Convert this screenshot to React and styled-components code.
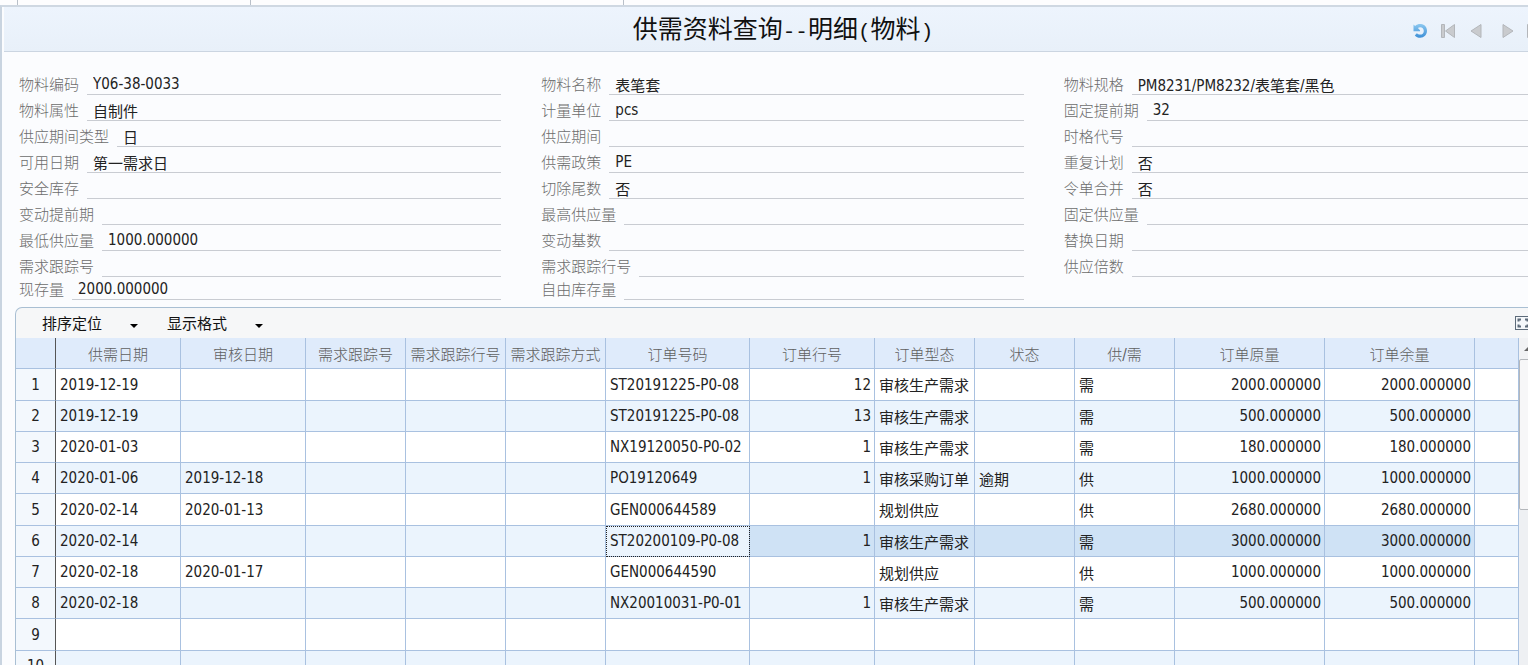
import React from 'react';
import styled, { createGlobalStyle, css } from 'styled-components';

const GlobalStyle = createGlobalStyle`
  * {
    box-sizing: border-box;
  }
  body {
    margin: 0;
    background: #fbfcfe;
    color: #222;
    font-family: "DejaVu Sans Condensed", "Noto Sans CJK SC", sans-serif;
    font-size: 15px;
  }
  button, input {
    font: inherit;
    color: inherit;
  }
`;

const Page = styled.div`
  height: 100vh;
  overflow: hidden;
  display: flex;
  flex-direction: column;
`;

const TabStrip = styled.div`
  display: flex;
  flex: none;
  height: 5px;
  background: #fdfdfe;
`;

const TabEdge = styled.div`
  width: ${(p) => p.$width}px;
  border-right: 1px solid #b9c0c9;
`;

// the form is wider than the window, its right edge is cut off
const Sheet = styled.main`
  flex: 1;
  min-height: 0;
  width: calc(100% + 34px);
  display: flex;
  flex-direction: column;
  border-top: 2px solid #cfd8e2;
  border-left: 2px solid #c9d4e0;
`;

const Header = styled.header`
  flex: none;
  display: grid;
  grid-template-columns: 1fr auto 1fr;
  align-items: center;
  height: 45px;
  margin-left: 2px;
  padding: 0 12px;
  background: linear-gradient(#edf4fd, #e8f0f9);
  border-bottom: 1px solid #cbd5e1;
`;

const Title = styled.h1`
  grid-column: 2;
  margin: 0;
  padding-top: 2px;
  font-size: 25px;
  line-height: 42px;
  font-weight: 400;
  color: #111;
`;

const Half = styled.span`
  font-family: "Liberation Mono", monospace;
  font-size: 21px;
`;

const Nav = styled.nav`
  display: flex;
  justify-content: flex-end;
`;

const NavButton = styled.button`
  display: flex;
  align-items: center;
  justify-content: center;
  width: 28px;
  height: 28px;
  margin-left: ${(p) => (p.$apart ? 4 : 0)}px;
  padding: 0;
  border: none;
  background: none;
  cursor: pointer;
`;

const Form = styled.form`
  flex: none;
  display: grid;
  grid-template-columns: repeat(3, 1fr);
  gap: 40px;
  padding: 17px 16px 0 17px;
`;

const FormColumn = styled.div`
  display: grid;
  grid-template-rows: repeat(8, 26px) 23px;
`;

const Field = styled.div`
  display: flex;
  align-items: flex-end;
  gap: 8px;
`;

const Label = styled.label`
  flex: none;
  line-height: 20px;
  font-weight: 300;
  color: #6c6c6c;
`;

const Value = styled.input`
  flex: 1;
  min-width: 0;
  height: 21px;
  padding: 0 6px;
  border: none;
  border-bottom: 1px solid #c9ccd2;
  border-radius: 0;
  background: none;
  outline: none;
`;

const Panel = styled.section`
  flex: 1;
  min-height: 0;
  overflow: hidden;
  margin: 7px 16px 0 13px;
  border: 1px solid #a9bfd3;
  border-bottom: none;
  border-radius: 7px 7px 0 0;
  background: #f6f7f8;
`;

const Toolbar = styled.div`
  display: flex;
  align-items: center;
  justify-content: space-between;
  height: 30px;
  padding: 0 14px 0 26px;
`;

const Menus = styled.div`
  display: flex;
  gap: 29px;
`;

const MenuButton = styled.button`
  display: flex;
  align-items: center;
  gap: 28px;
  padding: 2px 0 0;
  border: none;
  background: none;
  line-height: 28px;
  color: #111;
  cursor: pointer;
`;

const Caret = styled.span`
  margin-top: 4px;
  border: 4px solid transparent;
  border-top-color: #000;
  border-bottom: none;
`;

const GridArea = styled.div`
  display: flex;
  margin-right: 9px;
`;

const Table = styled.table`
  flex: 1;
  width: 0;
  table-layout: fixed;
  border-collapse: separate;
  border-spacing: 0;
`;

const HeadCell = styled.th`
  height: 31px;
  padding: 0;
  border-right: 1px solid ${(p) => (p.$corner ? '#555' : '#a9c1e0')};
  border-bottom: 1px solid #a9c1e0;
  background: #dfebfb;
  font-weight: 300;
  color: #606060;
  white-space: nowrap;
`;

const Row = styled.tr`
  height: 31px;
  background: ${(p) => (p.$even ? '#ebf4fd' : '#fff')};
  &:nth-child(4n + 1) {
    height: 32px;
  }
`;

const RowNumber = styled.th`
  padding: 0;
  border-right: 1px solid #555;
  border-bottom: 1px solid #a9c1e0;
  background: #f3f8fd;
  font-weight: 400;
`;

const Cell = styled.td`
  padding: 0 3px 0 4px;
  border-right: 1px solid #a9c1e0;
  border-bottom: 1px solid #a9c1e0;
  text-align: ${(p) => (p.$right ? 'right' : 'left')};
  white-space: nowrap;
  ${(p) => p.$selected && css`background: #cfe2f5;`}
  ${(p) => p.$focus && css`
    outline: 1px dotted #222;
    outline-offset: -1px;
  `}
`;

const ScrollTrack = styled.div`
  flex: none;
  width: 17px;
  background: #eef0f3;
`;

const ScrollArrow = styled.div`
  display: flex;
  align-items: center;
  justify-content: center;
  height: 21px;
  background: #f1f2f4;
`;

const ScrollUp = styled.span`
  border: 4px solid transparent;
  border-bottom-color: #666;
  border-top: none;
`;

const ScrollThumb = styled.div`
  height: 151px;
  border: 1px solid #b4b7bb;
  border-radius: 2px;
  background: #f7f7f8;
`;

const formColumns = [
  [
    ['物料编码', 'Y06-38-0033'],
    ['物料属性', '自制件'],
    ['供应期间类型', '日'],
    ['可用日期', '第一需求日'],
    ['安全库存', ''],
    ['变动提前期', ''],
    ['最低供应量', '1000.000000'],
    ['需求跟踪号', ''],
    ['现存量', '2000.000000'],
  ],
  [
    ['物料名称', '表笔套'],
    ['计量单位', 'pcs'],
    ['供应期间', ''],
    ['供需政策', 'PE'],
    ['切除尾数', '否'],
    ['最高供应量', ''],
    ['变动基数', ''],
    ['需求跟踪行号', ''],
    ['自由库存量', ''],
  ],
  [
    ['物料规格', 'PM8231/PM8232/表笔套/黑色'],
    ['固定提前期', '32'],
    ['时格代号', ''],
    ['重复计划', '否'],
    ['令单合并', '否'],
    ['固定供应量', ''],
    ['替换日期', ''],
    ['供应倍数', ''],
  ],
];

const columns = [
  { title: '供需日期', width: 125 },
  { title: '审核日期', width: 125 },
  { title: '需求跟踪号', width: 100 },
  { title: '需求跟踪行号', width: 100 },
  { title: '需求跟踪方式', width: 100 },
  { title: '订单号码', width: 144 },
  { title: '订单行号', width: 125, right: true },
  { title: '订单型态', width: 100 },
  { title: '状态', width: 100 },
  { title: '供/需', width: 100 },
  { title: '订单原量', width: 150, right: true },
  { title: '订单余量', width: 150, right: true },
];

const rows = [
  ['2019-12-19', '', '', '', '', 'ST20191225-P0-08', '12', '审核生产需求', '', '需', '2000.000000', '2000.000000'],
  ['2019-12-19', '', '', '', '', 'ST20191225-P0-08', '13', '审核生产需求', '', '需', '500.000000', '500.000000'],
  ['2020-01-03', '', '', '', '', 'NX19120050-P0-02', '1', '审核生产需求', '', '需', '180.000000', '180.000000'],
  ['2020-01-06', '2019-12-18', '', '', '', 'PO19120649', '1', '审核采购订单', '逾期', '供', '1000.000000', '1000.000000'],
  ['2020-02-14', '2020-01-13', '', '', '', 'GEN000644589', '', '规划供应', '', '供', '2680.000000', '2680.000000'],
  ['2020-02-14', '', '', '', '', 'ST20200109-P0-08', '1', '审核生产需求', '', '需', '3000.000000', '3000.000000'],
  ['2020-02-18', '2020-01-17', '', '', '', 'GEN000644590', '', '规划供应', '', '供', '1000.000000', '1000.000000'],
  ['2020-02-18', '', '', '', '', 'NX20010031-P0-01', '1', '审核生产需求', '', '需', '500.000000', '500.000000'],
  [],
  [],
];

const selectedRow = 5;
const focusColumn = 5;

const RefreshIcon = () => (
  <svg width="16" height="16" viewBox="0 0 16 16" fill="none">
    <defs>
      <linearGradient id="refresh" x1="0" y1="0" x2="0" y2="1">
        <stop offset="0" stopColor="#8cc8f0" />
        <stop offset="1" stopColor="#3d8fd6" />
      </linearGradient>
    </defs>
    <path
      d="M1.500 1.500l1.600 1.400C5 1.300 7 .9 9 1.100c3.600.3 6 3.200 6 6.700 0 4-3 7-6.800 7-2.200 0-4-.8-5.400-2.300l2-2.300c1 .9 2 1.400 3.300 1.400 2.200 0 3.700-1.600 3.700-3.700S10.300 4.300 8.200 4.300c-1 0-1.700.3-2.300.8L8 7.300v1H1.500z"
      fill="url(#refresh)"
    />
  </svg>
);

const FirstIcon = () => (
  <svg width="14" height="14" viewBox="0 0 14 14" fill="#c9cbce" stroke="#b3b6ba">
    <path d="M.5.5h3v13h-3zM13.500 .5v13L4.500 7z" />
  </svg>
);

const PrevIcon = () => (
  <svg width="12" height="14" viewBox="0 0 12 14" fill="#c9cbce" stroke="#b3b6ba">
    <path d="M11 .5v13L1 7z" />
  </svg>
);

const NextIcon = () => (
  <svg width="12" height="14" viewBox="0 0 12 14" fill="#c9cbce" stroke="#b3b6ba">
    <path d="M1 .5v13L11 7z" />
  </svg>
);

const LastIcon = () => (
  <svg width="18" height="14" viewBox="0 0 18 14" fill="#c9cbce" stroke="#b3b6ba">
    <path d="M.5.5v13L12 7zM13.500 .5h3v13h-3z" />
  </svg>
);

const ExpandIcon = () => (
  <svg width="16" height="14" viewBox="0 0 16 14" fill="none" stroke="#5d6b7a">
    <rect x=".5" y=".5" width="15" height="13" fill="#f4f7fa" />
    <path d="M3.500 5.500v-2H6M10 3.500h2.500v2M12.500 8.500v2H10M6 10.500H3.500v-2" strokeWidth="2" />
  </svg>
);

const ExpandButton = styled(NavButton)`
  width: 16px;
`;

const App = () => {
  return (
    <Page>
      <GlobalStyle />
      <TabStrip>
        <TabEdge $width={18} />
        <TabEdge $width={233} />
        <TabEdge $width={373} />
      </TabStrip>
      <Sheet>
        <Header>
          <Title>
            供需资料查询<Half>--</Half>明细<Half>(</Half>物料<Half>)</Half>
          </Title>
          <Nav>
            <NavButton aria-label="刷新"><RefreshIcon /></NavButton>
            <NavButton aria-label="首张"><FirstIcon /></NavButton>
            <NavButton aria-label="上张"><PrevIcon /></NavButton>
            <NavButton aria-label="下张" $apart><NextIcon /></NavButton>
            <NavButton aria-label="末张"><LastIcon /></NavButton>
          </Nav>
        </Header>

        <Form>
          {formColumns.map((fields, c) => (
            <FormColumn key={c}>
              {fields.map(([label, value], i) => (
                <Field key={label}>
                  <Label htmlFor={`field-${c}-${i}`}>{label}</Label>
                  <Value id={`field-${c}-${i}`} defaultValue={value} />
                </Field>
              ))}
            </FormColumn>
          ))}
        </Form>

        <Panel>
          <Toolbar>
            <Menus>
              <MenuButton>排序定位<Caret /></MenuButton>
              <MenuButton>显示格式<Caret /></MenuButton>
            </Menus>
            <ExpandButton aria-label="全屏"><ExpandIcon /></ExpandButton>
          </Toolbar>
          <GridArea>
            <Table>
              <colgroup>
                <col width={40} />
                {columns.map((col) => (
                  <col key={col.title} width={col.width} />
                ))}
                <col />
              </colgroup>
              <thead>
                <tr>
                  <HeadCell $corner />
                  {columns.map((col) => (
                    <HeadCell key={col.title}>{col.title}</HeadCell>
                  ))}
                  <HeadCell />
                </tr>
              </thead>
              <tbody>
                {rows.map((row, r) => (
                  <Row key={r} $even={r % 2 === 1}>
                    <RowNumber>{r + 1}</RowNumber>
                    {columns.map((col, c) => (
                      <Cell
                        key={col.title}
                        $right={col.right}
                        $selected={r === selectedRow && c > focusColumn}
                        $focus={r === selectedRow && c === focusColumn}
                      >
                        {row[c]}
                      </Cell>
                    ))}
                    <Cell />
                  </Row>
                ))}
              </tbody>
            </Table>
            <ScrollTrack>
              <ScrollArrow><ScrollUp /></ScrollArrow>
              <ScrollThumb />
            </ScrollTrack>
          </GridArea>
        </Panel>
      </Sheet>
    </Page>
  );
};

export default App;
